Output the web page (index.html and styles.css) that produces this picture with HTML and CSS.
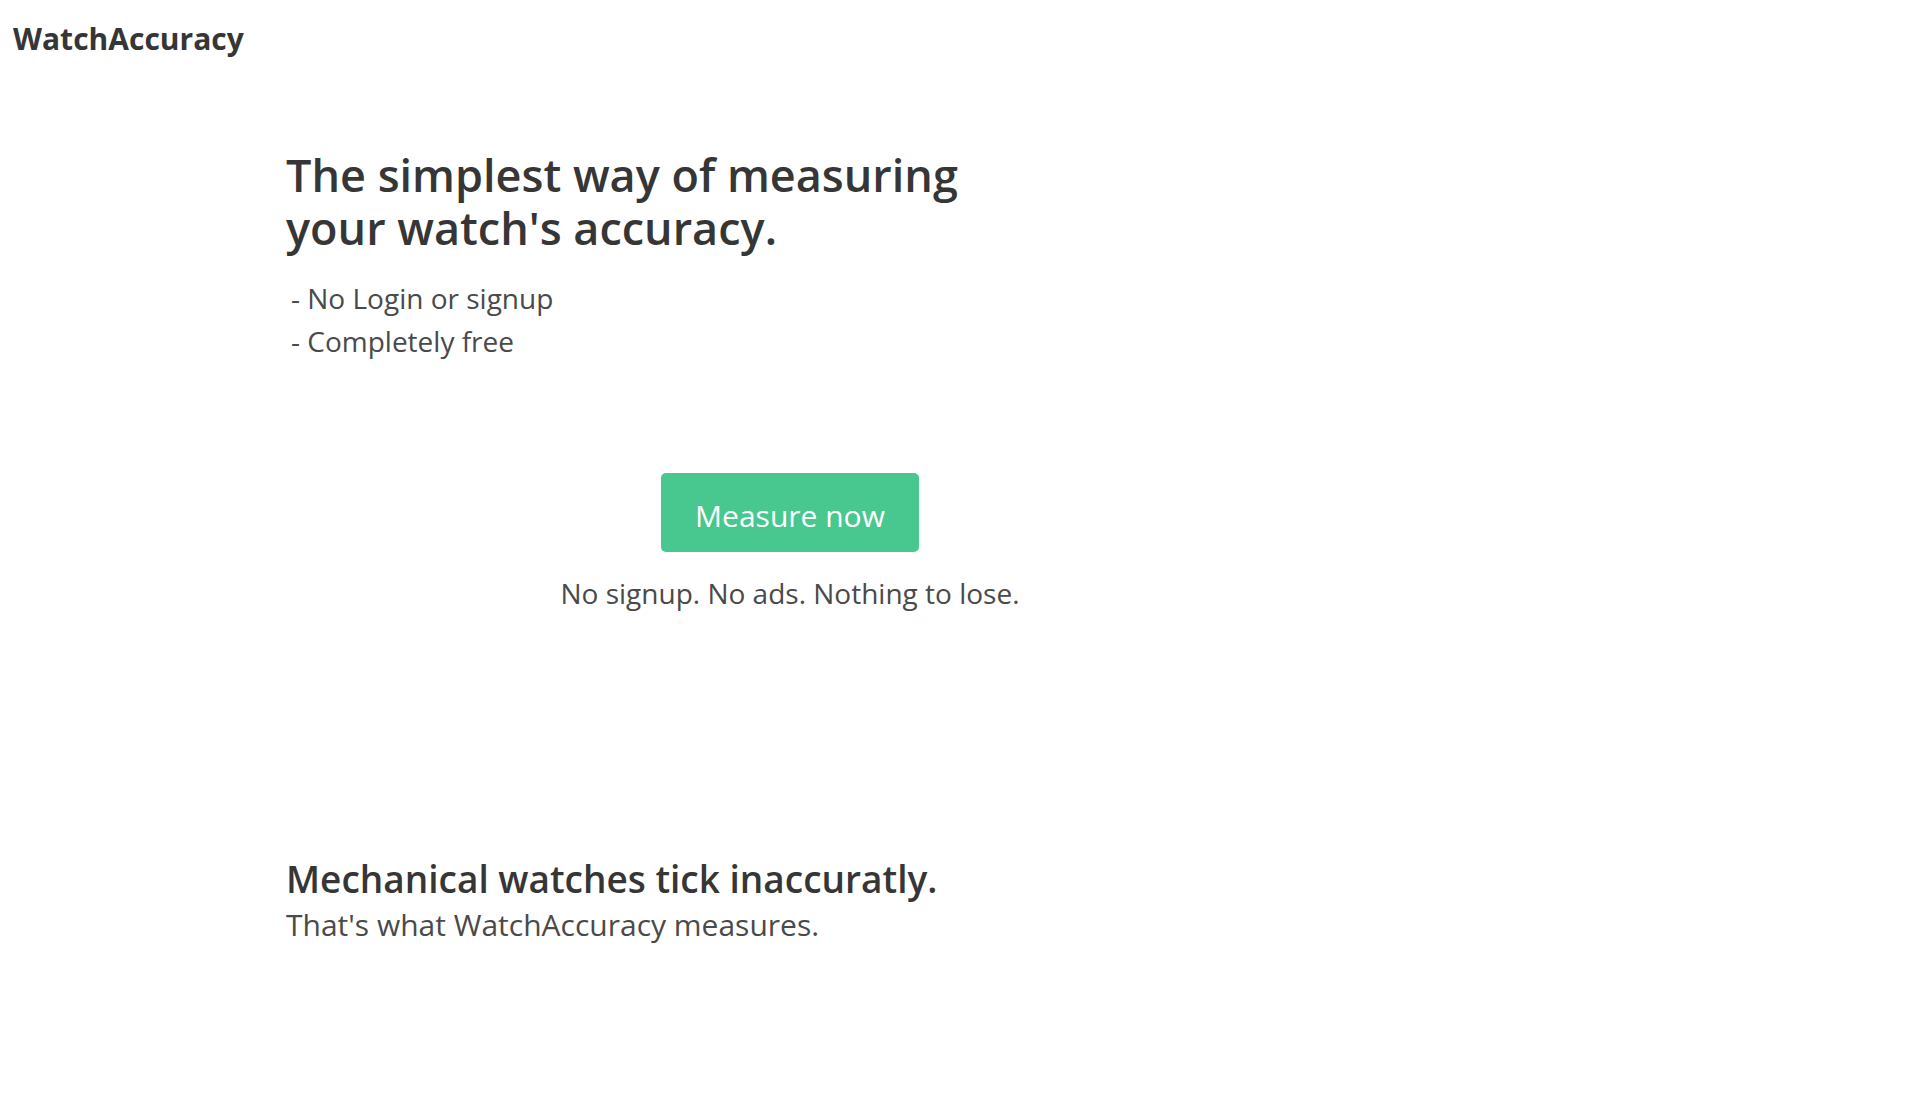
FILE: index.html
```html
<!DOCTYPE html>
<html lang="en">
<head>
<meta charset="utf-8">
<title>WatchAccuracy</title>
<link rel="stylesheet" href="styles.css">
</head>
<body>
<header class="navbar">
  <a class="brand" href="#">WatchAccuracy</a>
</header>
<main class="page">
  <section class="hero">
    <h1 class="title">The simplest way of measuring your watch's accuracy.</h1>
    <ul class="features">
      <li>- No Login or signup</li>
      <li>- Completely free</li>
    </ul>
    <div class="cta">
      <a class="button" href="#">Measure now</a>
      <p class="cta-note">No signup. No ads. Nothing to lose.</p>
    </div>
  </section>
  <section class="explain">
    <h2 class="subtitle-strong">Mechanical watches tick inaccuratly.</h2>
    <p class="lead">That's what WatchAccuracy measures.</p>
  </section>
</main>
</body>
</html>
```
FILE: styles.css
```css
html, body {
  margin: 0;
  padding: 0;
  background: #ffffff;
}
body {
  font-family: "Open Sans", "Noto Sans", sans-serif;
  color: #4a4a4a;
}
.navbar {
  padding: 19px 13px 0;
  height: 40px;
}
.brand {
  font-size: 30px;
  line-height: 40px;
  font-weight: 700;
  color: #363636;
  text-decoration: none;
}
.page {
  padding-left: 286px;
}
.hero {
  margin-top: 89px;
}
.title {
  margin: 0;
  max-width: 740px;
  font-size: 45px;
  line-height: 53px;
  font-weight: 600;
  color: #363636;
}
.features {
  list-style: none;
  margin: 23px 0 0;
  padding: 0 0 0 5px;
  font-size: 28px;
  line-height: 43px;
}
.cta {
  width: 1008px;
  margin-top: 110px;
  display: flex;
  flex-direction: column;
  align-items: center;
}
.button {
  display: block;
  height: 73px;
  padding: 6px 34px 0;
  line-height: 73px;
  font-size: 30px;
  color: #ffffff;
  background: #48c78e;
  border-radius: 5px;
  text-decoration: none;
}
.cta-note {
  margin: 21px 0 0;
  font-size: 28px;
  line-height: 40px;
}
.explain {
  margin-top: 243px;
}
.subtitle-strong {
  margin: 0;
  font-size: 37px;
  line-height: 46px;
  font-weight: 600;
  color: #363636;
}
.lead {
  margin: 4px 0 0;
  font-size: 30px;
  line-height: 38px;
}
```
